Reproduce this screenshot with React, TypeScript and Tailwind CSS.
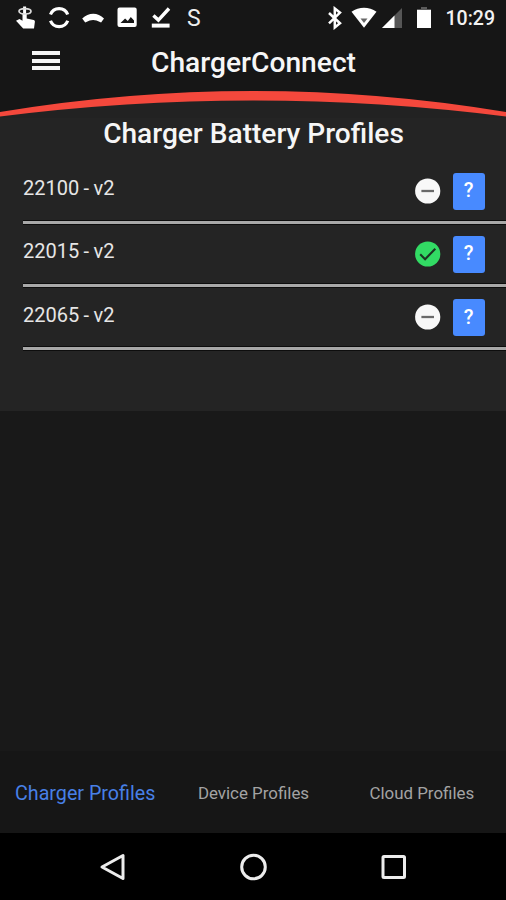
import type { ReactNode } from "react";
import { clsx } from "clsx";

interface Profile {
  name: string;
  active: boolean;
}

const profiles: Profile[] = [
  { name: "22100 - v2", active: false },
  { name: "22015 - v2", active: true },
  { name: "22065 - v2", active: false },
];

function StatusIcon({ children, className }: { children: ReactNode; className?: string }) {
  return (
    <svg viewBox="0 0 24 24" fill="currentColor" className={clsx("size-6 shrink-0", className)}>
      {children}
    </svg>
  );
}

function StatusBar() {
  return (
    <div className="flex h-9 items-center justify-between pr-[11px] pl-[13px] text-white">
      <div className="flex items-center gap-[10px]">
        {/* Touch */}
        <StatusIcon>
          <path d="M3 14.800 6.500 13l3 1.700V8h4.200v4.500l7 1.500c.8.200 1.300.9 1.200 1.800l-.9 6.700H10.200Z" />
          <path d="M11.600 .5v9" stroke="currentColor" strokeWidth="3" />
          <ellipse cx="12" cy="5.300" rx="6" ry="2.700" fill="none" stroke="#dcdcdc" strokeWidth="1.700" />
        </StatusIcon>
        {/* Sync */}
        <StatusIcon>
          <g fill="none" stroke="currentColor" strokeWidth="3.200">
            <path d="M3.500 8.500a9.200 9.200 0 0 1 17.200 0" />
            <path d="M3.500 14.700a9.200 9.200 0 0 0 17.200 0" />
          </g>
        </StatusIcon>
        {/* Call */}
        <StatusIcon>
          <path d="M1.200 12.500C7.500 6.200 17 6.200 23 12.500l-2.900 3.900-4.600-2c-2.200-.7-4.500-.7-6.800 0l-4.500 2Z" />
        </StatusIcon>
        {/* Picture */}
        <StatusIcon>
          <path
            fillRule="evenodd"
            d="M4.500 1.500h15.200a2 2 0 0 1 2 2v15.500a2 2 0 0 1-2 2H4.500a2 2 0 0 1-2-2V3.500a2 2 0 0 1 2-2ZM5.500 17h13.500v-2.500l-3.200-3.500-3 4-2.700-2.500Z"
          />
        </StatusIcon>
        {/* Download done */}
        <StatusIcon>
          <path d="m4.400 9.500 5 4.600L20 2.500" fill="none" stroke="currentColor" strokeWidth="3.400" />
          <path d="M2.800 17.600h17.800v4H2.800z" />
        </StatusIcon>
        <span className="ml-[4px] text-[23px] leading-none text-[#ededed]">S</span>
      </div>

      <div className="flex items-center">
        <StatusIcon className="mr-[4px]">
          <path
            d="m6 7 11 10.300-5.200 4.200V2.500L17 6.700 6 17.300"
            fill="none"
            stroke="currentColor"
            strokeWidth="2.500"
          />
        </StatusIcon>
        <svg viewBox="0 0 26 24" className="mr-[4px] h-6 w-[26px]" fill="currentColor">
          <path d="M.5 5.800C8 .4 18 .4 25.500 5.800L13 21.800Z" />
          <path d="M9.500 12.500h7L13 17Z" fill="#666" />
        </svg>
        <svg viewBox="0 0 22 22" className="mr-[13px] size-[22px]">
          <path d="M21 1v20H1Z" fill="#565656" />
          <path d="M13.500 8.500V21H1Z" fill="#fff" />
        </svg>
        <svg viewBox="0 0 16 22" className="mr-[14px] h-[22px] w-4">
          <path d="M5 0h6v2h4v3H1V2h4Z" fill="#5a5a5a" />
          <path d="M1 3h14v18H1Z" fill="#fff" />
        </svg>
        <span className="pt-px text-[19.5px] leading-none font-medium text-[#f2f2f2]">10:29</span>
      </div>
    </div>
  );
}

function ProfileRow({ name, active }: Profile) {
  return (
    <li className="ml-[23px] flex h-[63.33px] items-center border-b-[3px] border-[#a8a8a8] pr-[21.5px] shadow-[0_1px_0_#0d0d0d,inset_0_-1px_0_#0d0d0d]">
      <span className="flex-1 pb-[5px] text-[20px] leading-6 [word-spacing:-0.6px] text-[#e6e6e6]">
        {name}
      </span>
      <svg viewBox="0 0 26 26" className="mr-3 size-[26px]">
        <circle cx="12.700" cy="13" r="12.600" fill={active ? "#32db64" : "#f8f8f8"} />
        {active ? (
          <path d="m5.200 13.300 4.900 4.900L20.300 7.800" fill="none" stroke="#1c3323" strokeWidth="2.100" />
        ) : (
          <path d="M6.400 13h12.600" stroke="#6a6a6a" strokeWidth="2.300" />
        )}
      </svg>
      <button className="mt-px h-[37px] w-[32px] rounded-[3px] bg-[#488aff] pb-0.5 text-[20px] leading-none font-medium text-white">
        ?
      </button>
    </li>
  );
}

export default function App() {
  return (
    <div className="flex h-[900px] w-[506px] flex-col overflow-hidden bg-[#191919] font-['Roboto',sans-serif]">
      <header className="h-[90px] bg-[#161616]">
        <StatusBar />
        <div className="grid h-[54px] grid-cols-[100px_1fr_100px] items-center">
          <button className="ml-8 flex w-[28px] flex-col gap-[3.5px] pb-[5px]">
            <span className="h-[4px] bg-[#f4f4f4]" />
            <span className="h-[4px] bg-[#f4f4f4]" />
            <span className="h-[4px] bg-[#f4f4f4]" />
          </button>
          <h1 className="pt-px pl-px text-center text-[28.2px] leading-none font-medium text-[#f6f6f6]">
            ChargerConnect
          </h1>
        </div>
      </header>

      {/* Curved divider */}
      <svg viewBox="0 0 506 28" className="h-7 w-[506px] shrink-0 bg-[#222]">
        <path d="M0 0h506v23Q253-20 0 23Z" fill="#161616" />
        <path d="M0 22Q253-20 506 22v4.500Q253-5.500 0 26.500Z" fill="#f4483c" />
      </svg>

      <main className="h-[293px] bg-[#242424]">
        <h2 className="h-[42.4px] pl-px text-center text-[28.1px] leading-[31px] font-medium text-[#f6f6f6]">
          Charger Battery Profiles
        </h2>
        <ul>
          {profiles.map((profile) => (
            <ProfileRow key={profile.name} {...profile} />
          ))}
        </ul>
      </main>

      <nav className="mt-auto grid h-[82px] grid-cols-3 items-center bg-[#161616] pt-[3px] pl-px text-center text-[16.9px] text-[#a3a3a3]">
        <span className="text-[19.7px] text-[#4880e6]">Charger Profiles</span>
        <span>Device Profiles</span>
        <span>Cloud Profiles</span>
      </nav>

      <footer className="flex h-[67px] items-center justify-center gap-[112px] bg-black text-[#ececec]">
        <svg viewBox="0 0 28 28" className="size-7" fill="none" stroke="currentColor" strokeWidth="3">
          <path d="M24 2.500v23L3 14Z" strokeLinejoin="round" />
        </svg>
        <svg viewBox="0 0 28 28" className="size-7" fill="none" stroke="currentColor" strokeWidth="3">
          <circle cx="14.500" cy="14" r="11.800" />
        </svg>
        <svg viewBox="0 0 28 28" className="size-7" fill="none" stroke="currentColor" strokeWidth="3">
          <rect x="4" y="3.500" width="21.500" height="21" rx="1" />
        </svg>
      </footer>
    </div>
  );
}
